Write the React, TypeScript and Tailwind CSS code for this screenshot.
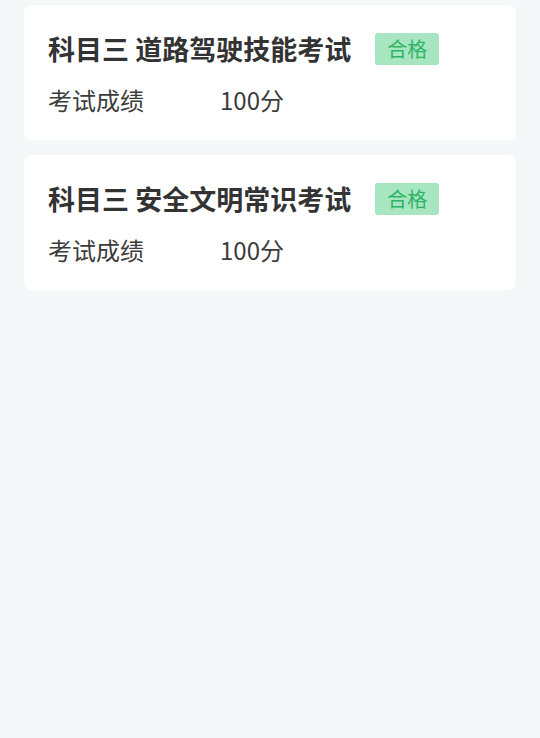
import React from 'react';

const exams = [
    { title: '科目三 道路驾驶技能考试', status: '合格', score: '100分' },
    { title: '科目三 安全文明常识考试', status: '合格', score: '100分' },
];

const ExamCard = ({ title, status, score }: { title: string; status: string; score: string }) => (
    <div className="bg-white rounded-lg px-6 pt-[26px] pb-6">
        <div className="flex items-center h-9">
            <h3 className="text-[27px] leading-9 font-bold text-[#333333]">{title}</h3>
            <span className="ml-6 px-3 h-8 leading-8 text-[20px] rounded-[3px] bg-[#a8e6c1] text-[#2fb466]">{status}</span>
        </div>
        <div className="flex mt-[17px] text-[24px] leading-8 text-[#3c3c3c]">
            <span className="w-[172px]">考试成绩</span>
            <span>{score}</span>
        </div>
    </div>
);

export default function App() {
    return (
        <div
            className="min-h-[738px] bg-[#f4f8f9] px-6 pt-[5px] flex flex-col gap-[15px]"
            style={{ fontFamily: '"Noto Sans CJK SC", "Noto Sans", sans-serif' }}
        >
            {exams.map((e, i) => (
                <ExamCard key={i} {...e} />
            ))}
        </div>
    );
}
